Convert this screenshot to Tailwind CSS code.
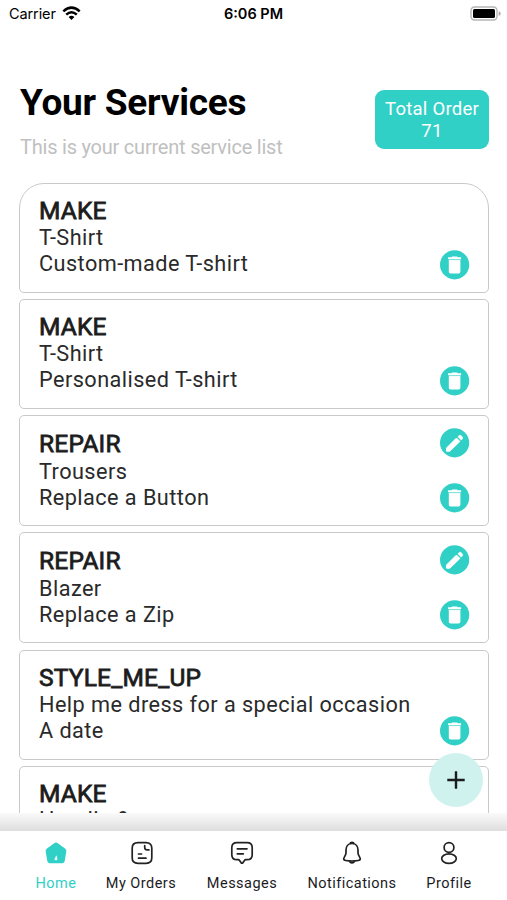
<!DOCTYPE html>
<html lang="en">
<head>
  <meta charset="UTF-8">
  <meta name="viewport" content="width=device-width, initial-scale=1.0">
  <title>Your Services</title>
  <script src="https://cdn.jsdelivr.net/npm/@tailwindcss/browser@4"></script>
</head>
<body class="bg-white font-['Roboto',sans-serif] text-[#1c1b1f]">
  <!-- Shared icons -->
  <svg class="hidden">
    <symbol id="trash" viewBox="0 0 30 30">
      <circle cx="14.6" cy="14.8" r="14.600" fill="#30d0c6"/>
      <path d="M12.200 6.400h4.800l.9.900h3.200v2h-13V7.300h3.200z" fill="#fff"/>
      <path d="M8.800 9.900h11.600v11.800q0 1.800-1.800 1.800h-8q-1.800 0-1.800-1.800z" fill="#fff"/>
      <path d="M8.800 9.700h11.600" stroke="#9fe8e3" stroke-width=".6"/>
    </symbol>
    <symbol id="pencil" viewBox="0 0 30 30">
      <circle cx="14.6" cy="14.8" r="14.600" fill="#30d0c6"/>
      <path d="M6.500 20 16.500 10l3.400 3.400L9.900 23.200H6.500z" fill="#fff" stroke="#fff" stroke-width="1" stroke-linejoin="round"/>
      <path d="m17.800 8.700 1.400-1.200q1-.8 2 .1l1.200 1.300q.9 1 0 2l-1.300 1.300z" fill="#fff" stroke="#fff" stroke-width=".4"/>
    </symbol>
  </svg>

  <div class="h-[900px] w-[507px] flex flex-col overflow-hidden relative">
    <!-- Status bar -->
    <div class="h-7 shrink-0 grid grid-cols-3 items-center pl-[9px] pr-[6px] text-black font-['Inter',sans-serif] text-[14.500px]">
      <div class="flex items-center gap-[6px]">
        <span class="tracking-[-0.1px]">Carrier</span>
        <svg class="w-[19px] h-[15px] relative -top-px" viewBox="0 0 19 15" fill="none" stroke="#000" stroke-width="2.500">
          <path d="M1.300 5.400Q9.500-2.200 17.700 5.400"/>
          <path d="M4.200 8.600q5.300-4.800 10.600 0"/>
          <path d="m9.500 14-2.900-3q2.900-2.400 5.800 0z" fill="#000" stroke="none"/>
        </svg>
      </div>
      <div class="text-center font-semibold pr-[3px]">6:06 PM</div>
      <svg class="w-[31px] h-[15px] justify-self-end relative -top-px" viewBox="0 0 31 15">
        <rect x="1" y="1" width="26" height="13" rx="3.500" fill="#fff" stroke="#b5b5b5" stroke-width="1.400"/>
        <rect x="3" y="3" width="22" height="9" rx="1.500" fill="#000"/>
        <path d="M28.700 5v5q2-1 2-2.500t-2-2.500" fill="#a5a5a5"/>
      </svg>
    </div>

    <!-- Header -->
    <div class="h-[155px] shrink-0 flex justify-between pl-5 pr-[18px]">
      <div class="pt-[53px]">
        <h1 class="text-[37px] leading-[44px] tracking-[-0.250px] font-bold text-black whitespace-nowrap">Your Services</h1>
        <p class="mt-[10px] text-[20px] leading-6 tracking-[-0.220px] text-[#c0c0c0] whitespace-nowrap">This is your current service list</p>
      </div>
      <div class="mt-[62px] w-[114px] h-[59px] pt-[8px] rounded-[9px] bg-[#30d0c6] text-white text-center text-[18.500px] leading-[22px] tracking-[0.250px] whitespace-nowrap">
        Total Order<br>71
      </div>
    </div>

    <!-- Service list -->
    <div class="h-[630px] shrink-0 overflow-hidden pl-[19px] pr-[18px] flex flex-col gap-[6px] text-[21.700px] leading-[26px] tracking-[0.440px] text-[#2a2a2a] whitespace-nowrap">
      <div class="h-[110px] shrink-0 flex justify-between pl-[19px] pr-[18px] border-[1.500px] border-[#c9c9c9] rounded-t-[25px] rounded-b-[5px]">
        <div class="pt-[13px]">
          <h2 class="text-[24.500px] leading-[28px] tracking-[0.2px] font-normal [-webkit-text-stroke:0.8px_#1c1c1c] text-[#1c1c1c]">MAKE</h2>
          <p>T-Shirt</p>
          <p>Custom-made T-shirt</p>
        </div>
        <svg class="mt-[66px] size-[30px]"><use href="#trash"/></svg>
      </div>

      <div class="h-[110px] shrink-0 flex justify-between pl-[19px] pr-[18px] border-[1.500px] border-[#c9c9c9] rounded-[5px]">
        <div class="pt-[13px]">
          <h2 class="text-[24.500px] leading-[28px] tracking-[0.2px] font-normal [-webkit-text-stroke:0.8px_#1c1c1c] text-[#1c1c1c]">MAKE</h2>
          <p>T-Shirt</p>
          <p>Personalised T-shirt</p>
        </div>
        <svg class="mt-[66px] size-[30px]"><use href="#trash"/></svg>
      </div>

      <div class="h-[111px] shrink-0 flex justify-between pl-[19px] pr-[18px] border-[1.500px] border-[#c9c9c9] rounded-[5px]">
        <div class="pt-[13px]">
          <h2 class="text-[24.500px] leading-[29px] tracking-[0.2px] font-normal [-webkit-text-stroke:0.8px_#1c1c1c] text-[#1c1c1c]">REPAIR</h2>
          <p class="mt-px">Trousers</p>
          <p>Replace a Button</p>
        </div>
        <div class="pt-[12px] flex flex-col gap-[25px]">
          <svg class="size-[30px]"><use href="#pencil"/></svg>
          <svg class="size-[30px]"><use href="#trash"/></svg>
        </div>
      </div>

      <div class="h-[111px] mb-px shrink-0 flex justify-between pl-[19px] pr-[18px] border-[1.500px] border-[#c9c9c9] rounded-[5px]">
        <div class="pt-[13px]">
          <h2 class="text-[24.500px] leading-[29px] tracking-[0.2px] font-normal [-webkit-text-stroke:0.8px_#1c1c1c] text-[#1c1c1c]">REPAIR</h2>
          <p class="mt-px">Blazer</p>
          <p>Replace a Zip</p>
        </div>
        <div class="pt-[12px] flex flex-col gap-[25px]">
          <svg class="size-[30px]"><use href="#pencil"/></svg>
          <svg class="size-[30px]"><use href="#trash"/></svg>
        </div>
      </div>

      <div class="h-[110px] shrink-0 flex justify-between pl-[19px] pr-[18px] border-[1.500px] border-[#c9c9c9] rounded-[5px]">
        <div class="pt-[13px]">
          <h2 class="text-[24.500px] leading-[28px] tracking-[0.2px] font-normal [-webkit-text-stroke:0.8px_#1c1c1c] text-[#1c1c1c]">STYLE_ME_UP</h2>
          <p>Help me dress for a special occasion</p>
          <p>A date</p>
        </div>
        <svg class="mt-[65px] size-[30px]"><use href="#trash"/></svg>
      </div>

      <div class="h-[110px] shrink-0 flex justify-between pl-[19px] pr-[18px] border-[1.500px] border-[#c9c9c9] rounded-[5px]">
        <div class="pt-[13px]">
          <h2 class="text-[24.500px] leading-[28px] tracking-[0.2px] font-normal [-webkit-text-stroke:0.8px_#1c1c1c] text-[#1c1c1c]">MAKE</h2>
          <p class="-mt-px">Hoodie &amp;</p>
        </div>
      </div>
    </div>

    <!-- Tab bar with its top shadow -->
    <div class="h-[18px] shrink-0 bg-linear-to-b from-[#fafafa] to-[#dedede]"></div>
    <nav class="h-[69px] shrink-0 bg-white flex text-[14.500px] leading-[18px] tracking-[0.470px] whitespace-nowrap">
      <div class="w-[98px] pl-[14px] flex flex-col items-center pt-[10px] gap-[10px] text-[#30d0c6]">
        <svg class="size-6" viewBox="0 0 24 24" fill="currentColor">
          <path d="M10.500 2.100q1.500-1.200 3 0l7.500 5.500q1.600 1.100 1.300 3l-1.500 8.800q-.5 2.900-3.400 2.900H6.600q-2.900 0-3.400-2.900l-1.500-8.800q-.3-1.900 1.300-3z"/>
          <path d="M12.400 14.800l.7 4h-2.400z" fill="#fff" stroke="#fff" stroke-width=".6"/>
        </svg>
        <span>Home</span>
      </div>
      <div class="w-[86px] flex flex-col items-center pt-[10px] gap-[10px]">
        <svg class="size-6 relative left-[0.500px]" viewBox="0 0 24 24" fill="none" stroke="#222" stroke-width="1.700" stroke-linecap="round" stroke-linejoin="round">
          <path d="M16 1.700H8Q2.200 1.700 2.200 7.200v9.600q0 5.500 5.800 5.500h8q5.800 0 5.800-5.500V7.200q0-5.500-5.800-5.500z"/>
          <path d="M14.700 4.500v1.700q0 2.700 2.700 2.700h1.500M8.500 13h3M8.500 17.200h7.500"/>
        </svg>
        <span>My Orders</span>
      </div>
      <div class="w-[116px] flex flex-col items-center pt-[10px] gap-[10px]">
        <svg class="size-6" viewBox="0 0 24 24" fill="none" stroke="#222" stroke-width="1.700" stroke-linecap="round" stroke-linejoin="round">
          <path d="M7 1.700h10q5.200 0 5.200 5v7q0 5-5.200 5h-1.200q-.8 0-1.300.7L13 21.600q-1 1.200-2 0l-1.500-2.200q-.5-.7-1.300-.7H7q-5.200 0-5.200-5v-7q0-5 5.200-5zM7.300 7.800h9.700M7.300 12.800h6"/>
        </svg>
        <span>Messages</span>
      </div>
      <div class="w-[104px] flex flex-col items-center pt-[10px] gap-[10px]">
        <svg class="size-6" viewBox="0 0 24 24" fill="none" stroke="#222" stroke-width="1.700" stroke-linecap="round" stroke-linejoin="round">
          <path d="M12 2.500c-4 0-6 3-6 6.500v3c0 2.500-2.500 4.500-2.300 6q.2 1.200 2 1.500 6.300 1 12.600 0 1.800-.3 2-1.500c.2-1.500-2.300-3.500-2.300-6v-3c0-3.500-2-6.500-6-6.500z"/>
          <path d="M10.700 2q1.300-.7 2.600 0M10.200 21q1.800 1.400 3.600 0" stroke-width="2.200"/>
        </svg>
        <span>Notifications</span>
      </div>
      <div class="w-[90px] flex flex-col items-center pt-[10px] gap-[10px]">
        <svg class="size-6" viewBox="0 0 24 24" fill="none" stroke="#222" stroke-width="1.700">
          <circle cx="12" cy="6.500" r="4.900"/>
          <ellipse cx="12" cy="17.600" rx="7.300" ry="4.700"/>
        </svg>
        <span>Profile</span>
      </div>
    </nav>

    <!-- Floating add button -->
    <button class="absolute right-[24.500px] bottom-[93px] size-[54px] rounded-full bg-[#cff2ee] flex items-center justify-center">
      <svg class="size-[18px]" viewBox="0 0 18 18" stroke="#1c1b1f" stroke-width="2.400"><path d="M9 .3v17.400M.3 9h17.400"/></svg>
    </button>
  </div>
</body>
</html>
